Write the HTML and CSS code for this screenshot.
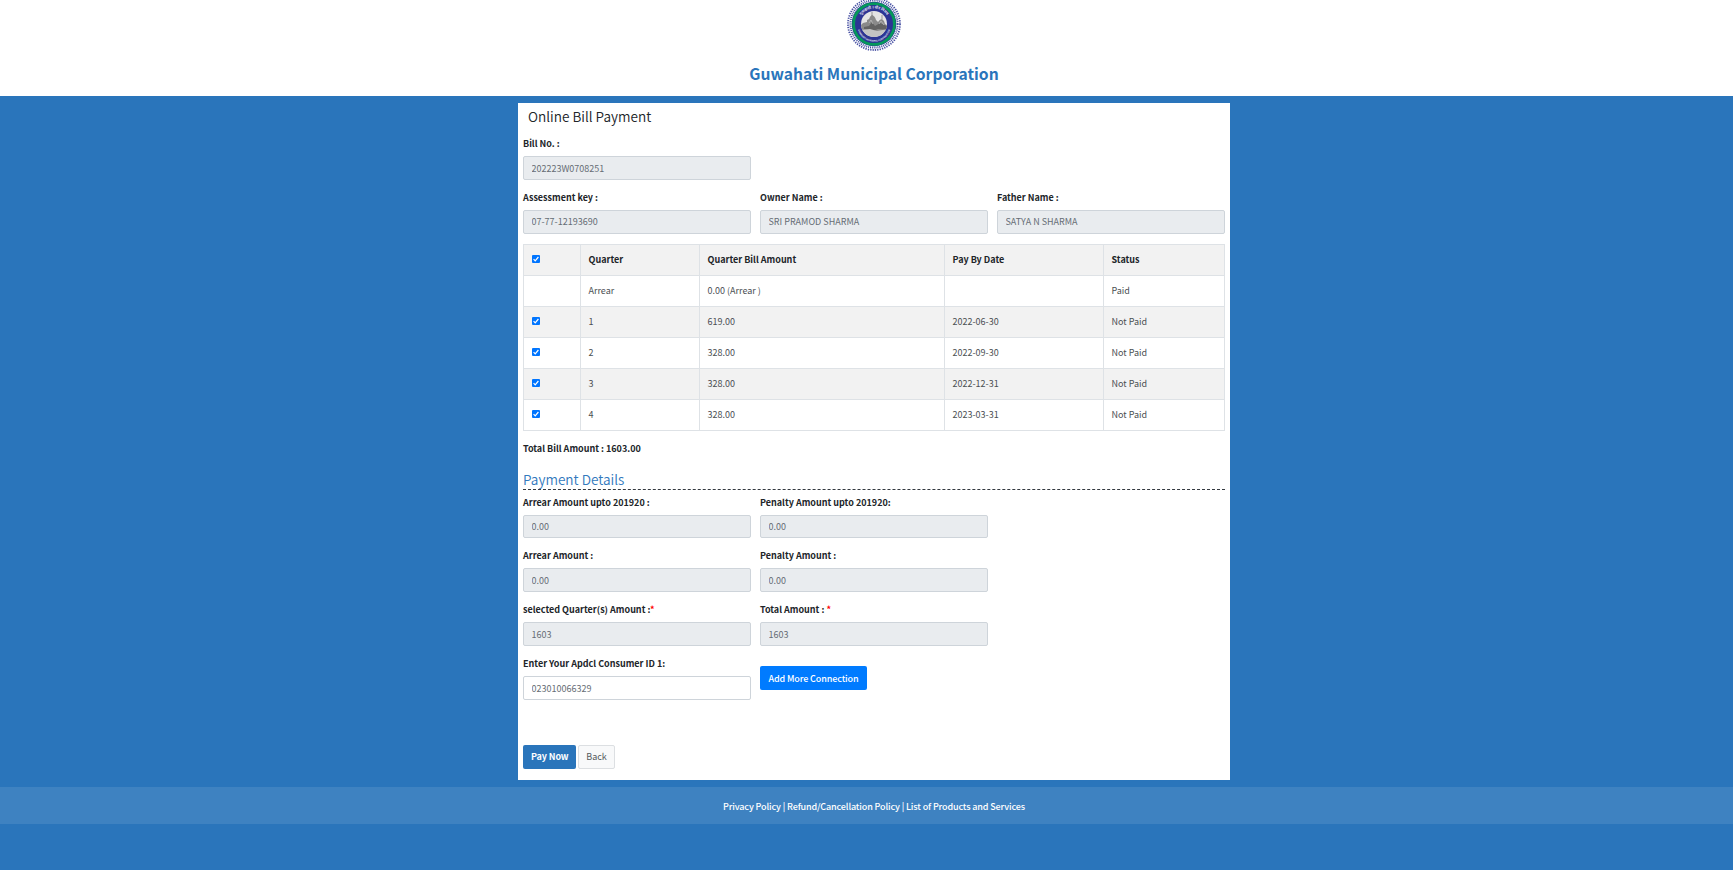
FILE: index.html
```html
<!DOCTYPE html>
<html lang="en">
<head>
<meta charset="utf-8">
<title>Guwahati Municipal Corporation</title>
<link rel="stylesheet" href="styles.css">
</head>
<body>
<header class="header">
  <svg class="logo" viewBox="0 0 54 54" aria-hidden="true">
    <defs>
      <clipPath id="scene"><circle cx="27" cy="27" r="13"/></clipPath>
      <path id="arc-top" d="M11.5 27a15.5 15.5 0 0 1 31 0"/>
      <path id="arc-bottom" d="M10.2 28a16.8 16.8 0 0 0 33.6 0"/>
    </defs>
    <circle cx="27" cy="27" r="23" fill="#fff"/>
    <circle class="ring-outer" cx="27" cy="27" r="26"/>
    <circle class="ring-inner" cx="27" cy="27" r="23.6"/>
    <circle cx="27" cy="27" r="22.3" fill="#2c3594"/>
    <circle cx="27" cy="27" r="20.4" fill="none" stroke="#05985b" stroke-width="2.8"/>
    <circle cx="27" cy="27" r="13" fill="#e4e4e4"/>
    <g clip-path="url(#scene)">
      <path d="M13 29l3-3 4-1v-2l2-1q1-3 3-4 3 1 4 5l2 2q2-3 4-3 3 2 3 5l3 2v5H13z" fill="#8a8a8a"/>
      <path d="M17 30l5-1 3-4 3 4 5-3 7 3v4l-9-1-5 2-9-2z" fill="#626262"/>
      <path d="M13 33l10-1 7 2 11-2-5 9H18z" fill="#c3c3c3"/>
      <path d="M25 15v4M35 18v4" stroke="#777" stroke-width=".7"/>
      <path d="M22 26l2-3 2 4M32 27l2-3 3 4" fill="none" stroke="#bbb" stroke-width=".8"/>
    </g>
    <text class="seal-text"><textPath href="#arc-top" startOffset="50%" text-anchor="middle">गुवाहाटी । पौर निगम</textPath></text>
    <text class="seal-text seal-small"><textPath href="#arc-bottom" startOffset="50%" text-anchor="middle">GUWAHATI MUNICIPAL CORPORATION</textPath></text>
  </svg>
  <h1 class="site-title">Guwahati Municipal Corporation</h1>
</header>

<main class="panel">
  <h2 class="page-title">Online Bill Payment</h2>
  <div class="grid bill-row">
    <div class="field"><label>Bill No. :</label><input value="202223W0708251" readonly></div>
  </div>
  <div class="grid owner-row">
    <div class="field"><label>Assessment key :</label><input value="07-77-12193690" readonly></div>
    <div class="field"><label>Owner Name :</label><input value="SRI PRAMOD SHARMA" readonly></div>
    <div class="field"><label>Father Name :</label><input value="SATYA N SHARMA" readonly></div>
  </div>

  <table class="quarters">
    <colgroup><col class="c-check"><col class="c-quarter"><col class="c-amount"><col class="c-date"><col class="c-status"></colgroup>
    <tr><th><span class="check"><svg viewBox="0 0 8 8"><path d="M1.6 4.2l1.6 1.6 3.2-3.8"/></svg></span></th><th>Quarter</th><th>Quarter Bill Amount</th><th>Pay By Date</th><th>Status</th></tr>
    <tr><td></td><td>Arrear</td><td>0.00 (Arrear )</td><td></td><td>Paid</td></tr>
    <tr><td><span class="check"><svg viewBox="0 0 8 8"><path d="M1.6 4.2l1.6 1.6 3.2-3.8"/></svg></span></td><td>1</td><td>619.00</td><td>2022-06-30</td><td>Not Paid</td></tr>
    <tr><td><span class="check"><svg viewBox="0 0 8 8"><path d="M1.6 4.2l1.6 1.6 3.2-3.8"/></svg></span></td><td>2</td><td>328.00</td><td>2022-09-30</td><td>Not Paid</td></tr>
    <tr><td><span class="check"><svg viewBox="0 0 8 8"><path d="M1.6 4.2l1.6 1.6 3.2-3.8"/></svg></span></td><td>3</td><td>328.00</td><td>2022-12-31</td><td>Not Paid</td></tr>
    <tr><td><span class="check"><svg viewBox="0 0 8 8"><path d="M1.6 4.2l1.6 1.6 3.2-3.8"/></svg></span></td><td>4</td><td>328.00</td><td>2023-03-31</td><td>Not Paid</td></tr>
  </table>

  <p class="total">Total Bill Amount : 1603.00</p>
  <h3 class="section-title">Payment Details</h3>

  <div class="grid details-first">
    <div class="field short"><label>Arrear Amount upto 201920 :</label><input value="0.00" readonly></div>
    <div class="field short"><label>Penalty Amount upto 201920:</label><input value="0.00" readonly></div>
  </div>
  <div class="grid details-row">
    <div class="field"><label>Arrear Amount :</label><input value="0.00" readonly></div>
    <div class="field"><label>Penalty Amount :</label><input value="0.00" readonly></div>
  </div>
  <div class="grid details-row">
    <div class="field"><label>selected Quarter(s) Amount :<span class="required">*</span></label><input value="1603" readonly></div>
    <div class="field"><label>Total Amount : <span class="required">*</span></label><input value="1603" readonly></div>
  </div>
  <div class="grid details-row">
    <div class="field"><label>Enter Your Apdcl Consumer ID 1:</label><input value="023010066329"></div>
    <button class="btn btn-add">Add More Connection</button>
  </div>

  <div class="actions">
    <button class="btn btn-pay">Pay Now</button>
    <button class="btn btn-back">Back</button>
  </div>
</main>

<footer class="footer"><a>Privacy Policy</a> | <a>Refund/Cancellation Policy</a> | <a>List of Products and Services</a></footer>
</body>
</html>
```
FILE: styles.css
```css
* { box-sizing: border-box; }
body {
  margin: 0;
  height: 870px;
  overflow: hidden;
  background: #2a75bb;
  color: #212529;
  font-family: "Noto Sans CJK SC", "Noto Sans", sans-serif;
  font-size: 9px;
  line-height: 12px;
}
h1, h2, h3, p { margin: 0; }

.header {
  height: 96px;
  padding-left: 15px;
  background: #fff;
  display: flex;
  flex-direction: column;
  align-items: center;
}
.logo { width: 54px; height: 54px; margin-top: -3px; flex: none; }
.ring-outer, .ring-inner { fill: none; stroke: #4750a3; stroke-width: 1.8; stroke-dasharray: 1.3 1.1; }
.ring-inner { stroke-width: 2; stroke-dasharray: 1 .9; }
.seal-text { fill: #e3e5f5; font-size: 3.8px; font-weight: 700; }
.seal-small { font-size: 2.3px; }
.site-title {
  margin-top: 11px;
  color: #2a75bb;
  font-size: 15.65px;
  line-height: 24px;
  font-weight: 700;
}

.panel {
  width: 712px;
  height: 677px;
  margin: 7px 0 0 518px;
  padding: 0 5px;
  background: #fff;
}
.page-title {
  height: 33px;
  padding: 3px 0 0 5px;
  font-size: 13.6px;
  line-height: 20px;
  font-weight: 350;
}
.grid { display: grid; grid-template-columns: repeat(3, 228px); column-gap: 9px; align-items: start; }
.field { display: flex; flex-direction: column; }
.field label { height: 20px; padding-top: 2px; font-weight: 700; white-space: pre; }
.field input {
  width: 100%;
  height: 24px;
  padding: 0 7.5px;
  border: 1px solid #ced4da;
  border-radius: 2px;
  background: #fff;
  color: #666d75;
  font: inherit;
}
.field input[readonly] { background: #e9ecef; }
.field.short input { height: 23px; }
.bill-row { height: 54px; }
.owner-row { height: 54px; }
.owner-row input { padding-bottom: 2px; }

.quarters { width: 702px; table-layout: fixed; border-collapse: collapse; }
.quarters tr { height: 31px; }
.quarters tr:nth-child(odd) { background: #f2f2f2; }
.quarters th, .quarters td {
  padding: 0 7.5px;
  border: 1px solid #dee2e6;
  text-align: left;
  vertical-align: middle;
}
.quarters td { color: #4b4f53; }
.c-check { width: 57px; }
.c-quarter { width: 119px; }
.c-amount { width: 245px; }
.c-date { width: 159px; }
.c-status { width: 121px; }
.check { display: block; width: 8px; height: 8px; margin-top: -2px; border-radius: 1px; background: #0075ff; }
.check svg { display: block; fill: none; stroke: #fff; stroke-width: 1.2; }

.total { height: 41px; padding-top: 12px; font-weight: 700; }
.section-title {
  height: 18px;
  border-bottom: 1px dashed #343a40;
  color: #3279bd;
  font-size: 13.6px;
  line-height: 15px;
  font-weight: 350;
}
.details-first { height: 58px; padding-top: 5px; }
.details-row { height: 54px; }
.required { color: #f00; }

.btn {
  height: 24px;
  padding: 0 7px;
  border: 1px solid transparent;
  border-radius: 2px;
  font: inherit;
  white-space: nowrap;
  text-align: center;
}
.btn-add { width: 107px; margin-top: 10px; padding-top: 2px; background: #007bff; color: #fff; font-weight: 500; letter-spacing: -.12px; }
.actions { display: flex; gap: 2px; padding-top: 35px; }
.btn-pay { width: 53px; background: #2a75bb; color: #fff; font-weight: 700; letter-spacing: -.1px; }
.btn-back { width: 37px; background: #f8f9fa; border-color: #dcdfe2; color: #55595d; }

.footer {
  height: 37px;
  margin-top: 7px;
  padding: 14px 0 0 15px;
  background: #3e82c1;
  color: #fff;
  text-align: center;
  font-weight: 500;
  letter-spacing: -.13px;
}
```
